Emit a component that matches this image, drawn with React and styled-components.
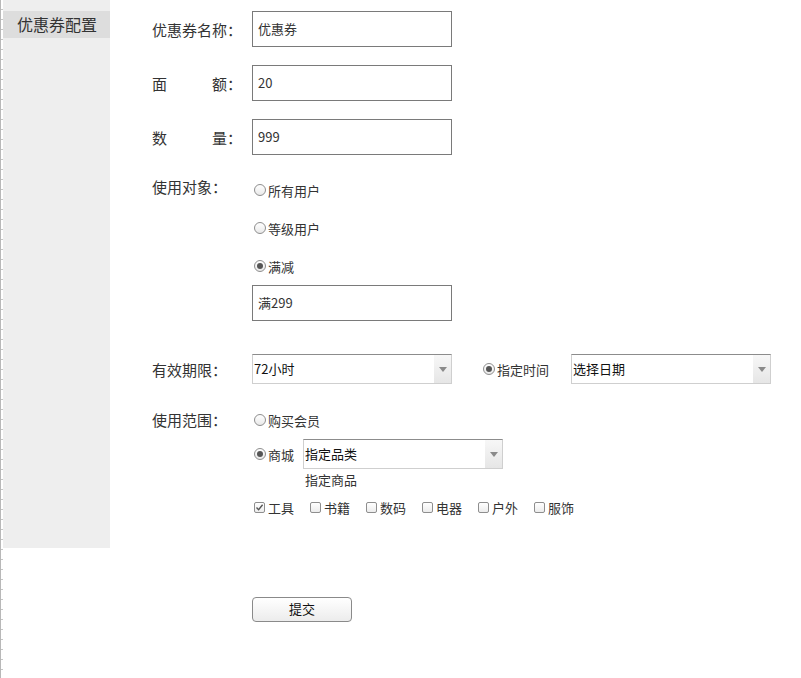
import React from 'react';
import styled, { createGlobalStyle } from 'styled-components';

const GlobalStyle = createGlobalStyle`
  html, body {
    margin: 0;
    padding: 0;
    background: #fff;
  }
  body {
    font-family: 'Noto Sans CJK SC', 'Noto Sans', sans-serif;
    color: #333;
  }
`;

const Page = styled.div`
  display: flex;
  align-items: flex-start;
  min-height: 678px;
`;

const Ruler = styled.div`
  flex: none;
  width: 2px;
  height: 678px;
  border-left: 1px solid #b8b8b8;
  background: repeating-linear-gradient(
    to bottom,
    transparent 0,
    transparent 9px,
    #c4c4c4 9px,
    #c4c4c4 10px
  );
`;

const Sidebar = styled.div`
  flex: none;
  width: 107px;
  height: 537px;
  padding-top: 11px;
  background: #eee;
`;

const SideItem = styled.div`
  height: 27px;
  line-height: 26px;
  padding-left: 14px;
  font-size: 16px;
  color: #333;
  background: ${(p) => (p.$active ? '#ddd' : 'transparent')};
`;

const Form = styled.form`
  display: flex;
  flex-direction: column;
  margin-left: 42px;
  padding-top: 11px;
`;

const Row = styled.div`
  display: flex;
  align-items: ${(p) => (p.$top ? 'flex-start' : 'center')};
  margin-top: ${(p) => p.$gap || 0}px;
`;

const Label = styled.div`
  flex: none;
  display: flex;
  justify-content: space-between;
  width: 90px;
  margin-right: 10px;
  margin-top: ${(p) => p.$shift || 0}px;
  font-size: 15px;
  line-height: 19px;
  color: #333;
`;

const Options = styled.div`
  display: flex;
  flex-direction: column;
  align-items: flex-start;
`;

const TextInput = styled.input`
  box-sizing: border-box;
  width: 200px;
  height: 36px;
  margin-top: ${(p) => p.$gap || 0}px;
  padding: 0 5px 1px;
  border: 1px solid #7a7a7a;
  border-radius: 0;
  font-family: inherit;
  font-size: 13px;
  color: #333;
  outline: none;
`;

const Choice = styled.label`
  display: flex;
  align-items: center;
  height: 20px;
  margin-top: ${(p) => p.$gap || 0}px;
  margin-left: ${(p) => p.$left || 0}px;
  margin-right: ${(p) => p.$right || 0}px;
  font-size: 13px;
  color: #333;
  white-space: nowrap;
`;

const RadioMark = styled.span`
  box-sizing: border-box;
  display: flex;
  align-items: center;
  justify-content: center;
  width: 12px;
  height: 12px;
  margin: 0 2px 0 2px;
  border: 1px solid #8e8e8e;
  border-radius: 50%;
  background: linear-gradient(#fff, #e9e9e9);

  &::after {
    content: '';
    display: ${(p) => (p.$checked ? 'block' : 'none')};
    width: 6px;
    height: 6px;
    border-radius: 50%;
    background: #555;
  }
`;

const BoxMark = styled.span`
  box-sizing: border-box;
  display: flex;
  align-items: center;
  justify-content: center;
  width: 11px;
  height: 11px;
  margin: 0 3px 0 2px;
  border: 1px solid #8e8e8e;
  border-radius: 2px;
  background: linear-gradient(#fff, #ececec);
`;

const SelectBox = styled.div`
  box-sizing: border-box;
  display: flex;
  flex: none;
  width: 200px;
  height: 30px;
  margin-left: ${(p) => p.$left || 0}px;
  border: 1px solid #cfcfcf;
  border-top-color: #8c8c8c;
  background: #fff;
`;

const SelectText = styled.div`
  flex: 1;
  padding-left: 1px;
  font-size: 13px;
  line-height: 27px;
  color: #111;
`;

const Arrow = styled.div`
  display: flex;
  align-items: center;
  justify-content: center;
  width: 17px;
  background: linear-gradient(#f7f7f7, #e6e6e6);

  &::after {
    content: '';
    border-left: 4px solid transparent;
    border-right: 4px solid transparent;
    border-top: 5px solid #8a8a8a;
  }
`;

const Hint = styled.div`
  margin-top: 2px;
  padding-left: 53px;
  font-size: 13px;
  line-height: 18px;
  color: #333;
`;

const CheckRow = styled.div`
  display: flex;
  margin-top: 8px;
`;

const Actions = styled.div`
  margin-top: 78px;
  padding-left: 100px;
`;

const Button = styled.button`
  box-sizing: border-box;
  width: 100px;
  height: 25px;
  padding: 0 0 1px;
  border: 1px solid #8a8a8a;
  border-radius: 4px;
  background: linear-gradient(#fff, #ececec);
  font-family: inherit;
  font-size: 13px;
  color: #111;
`;

const Radio = ({ checked, children, ...rest }) => (
  <Choice {...rest}>
    <RadioMark $checked={checked} />
    {children}
  </Choice>
);

const Check = ({ checked, children }) => (
  <Choice $right={14}>
    <BoxMark>
      {checked && (
        <svg width="9" height="9" viewBox="0 0 9 9">
          <path d="M1.5 4.6 L3.6 6.7 L7.6 1.8" fill="none" stroke="#555" strokeWidth="1.4" />
        </svg>
      )}
    </BoxMark>
    {children}
  </Choice>
);

const Select = ({ value, left }) => (
  <SelectBox $left={left}>
    <SelectText>{value}</SelectText>
    <Arrow />
  </SelectBox>
);

const categories = [
  { name: '工具', checked: true },
  { name: '书籍' },
  { name: '数码' },
  { name: '电器' },
  { name: '户外' },
  { name: '服饰' },
];

const App = () => (
  <>
    <GlobalStyle />
    <Page>
      <Ruler />
      <Sidebar>
        <SideItem $active>优惠券配置</SideItem>
      </Sidebar>
      <Form onSubmit={(e) => e.preventDefault()}>
        <Row>
          <Label><span>优惠券名称：</span></Label>
          <TextInput defaultValue="优惠券" />
        </Row>
        <Row $gap={18}>
          <Label><span>面</span><span>额：</span></Label>
          <TextInput defaultValue="20" />
        </Row>
        <Row $gap={18}>
          <Label><span>数</span><span>量：</span></Label>
          <TextInput defaultValue="999" />
        </Row>
        <Row $gap={25} $top>
          <Label $shift={-3}><span>使用对象：</span></Label>
          <Options>
            <Radio>所有用户</Radio>
            <Radio $gap={18}>等级用户</Radio>
            <Radio $gap={18} checked>满减</Radio>
            <TextInput $gap={9} defaultValue="满299" />
          </Options>
        </Row>
        <Row $gap={33}>
          <Label><span>有效期限：</span></Label>
          <Select value="72小时" />
          <Radio $left={29} checked>指定时间</Radio>
          <Select value="选择日期" left={22} />
        </Row>
        <Row $gap={26} $top>
          <Label><span>使用范围：</span></Label>
          <Options>
            <Radio>购买会员</Radio>
            <Row $gap={9}>
              <Radio checked>商城</Radio>
              <Select value="指定品类" left={9} />
            </Row>
            <Hint>指定商品</Hint>
            <CheckRow>
              {categories.map((c) => (
                <Check key={c.name} checked={c.checked}>{c.name}</Check>
              ))}
            </CheckRow>
          </Options>
        </Row>
        <Actions>
          <Button type="submit">提交</Button>
        </Actions>
      </Form>
    </Page>
  </>
);

export default App;
